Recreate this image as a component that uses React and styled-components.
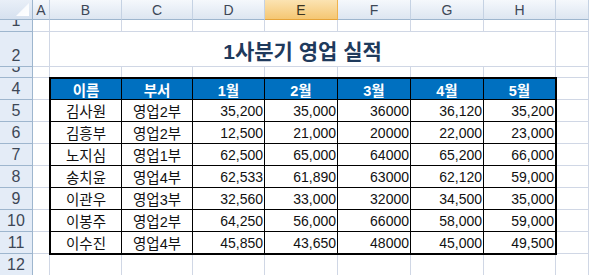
import React from 'react';
import styled, { createGlobalStyle } from 'styled-components';

const GlobalStyle = createGlobalStyle`
  html, body {
    margin: 0;
    padding: 0;
    background: #fff;
  }
  body {
    font-family: "Liberation Sans", "Noto Sans CJK KR", sans-serif;
    overflow: hidden;
  }
`;

const Sheet = styled.div`
  display: grid;
  grid-template-columns: 33px 17px 72px 71px 72px 73px 73px 73px 72px 1fr;
  grid-template-rows: 20px 12px 35px 11px repeat(9, 22px);
  width: 100vw;
  height: 100vh;
  overflow: hidden;
`;

const Corner = styled.div`
  position: relative;
  background: linear-gradient(#e9eff8, #d6e1ef);
  border-right: 1px solid #9eb6ce;
  border-bottom: 1px solid #9eb6ce;
  box-sizing: border-box;

  &::after {
    content: '';
    position: absolute;
    right: 3px;
    bottom: 3px;
    width: 13px;
    height: 13px;
    background: linear-gradient(135deg, #f4f7fc, #ffffff);
    clip-path: polygon(100% 0, 100% 100%, 0 100%);
  }
`;

const ColHead = styled.div`
  display: flex;
  align-items: center;
  justify-content: center;
  box-sizing: border-box;
  font-size: 14px;
  color: ${p => (p.$active ? '#3b3422' : '#3d4756')};
  background: ${p =>
    p.$active
      ? 'linear-gradient(#fbe3b2, #f5c773)'
      : 'linear-gradient(#f5f8fc, #dde6f1)'};
  border-right: 1px solid ${p => (p.$active ? '#f0b34d' : '#c5d2e3')};
  border-bottom: 1px solid ${p => (p.$active ? '#e6a43a' : '#9eb6ce')};
`;

const RowHead = styled.div`
  display: flex;
  align-items: flex-end;
  justify-content: center;
  overflow: hidden;
  box-sizing: border-box;
  font-size: 16px;
  line-height: 20px;
  color: #3d4756;
  background: #e4ecf7;
  border-right: 1px solid #9eb6ce;
  border-bottom: 1px solid #9eb6ce;
`;

const Cell = styled.div`
  box-sizing: border-box;
  border-right: 1px solid #d0d7e5;
  border-bottom: 1px solid #d0d7e5;
`;

const Title = styled.div`
  grid-column: span 7;
  display: flex;
  align-items: center;
  justify-content: center;
  box-sizing: border-box;
  border-right: 1px solid #d0d7e5;
  border-bottom: 1px solid #d0d7e5;
  font-size: 21px;
  font-weight: 700;
  color: #1f3a5c;
  padding-top: 1px;
`;

const Table = styled.div`
  grid-column: 3 / 10;
  grid-row: 5 / 13;
  margin: -1px;
  display: grid;
  grid-template-columns: 70px 70px 71px 72px 72px 72px 71px;
  grid-template-rows: 20px repeat(7, 21px);
  gap: 1px;
  background: #000;
  border: 2px solid #000;
  position: relative;
  z-index: 1;
`;

const HeadCell = styled.div`
  display: flex;
  align-items: center;
  justify-content: center;
  background: #0070c0;
  color: #fff;
  font-weight: 700;
  font-size: 14.5px;
`;

const DataCell = styled.div`
  display: flex;
  align-items: center;
  justify-content: ${p => (p.$num ? 'flex-end' : 'center')};
  padding-right: ${p => (p.$num ? '1px' : '0')};
  background: #fff;
  color: #111;
  font-size: ${p => (p.$num ? '14px' : '14.5px')};
`;

const cols = ['A', 'B', 'C', 'D', 'E', 'F', 'G', 'H', ''];
const heads = ['이름', '부서', '1월', '2월', '3월', '4월', '5월'];
const rows = [
  ['김사원', '영업2부', '35,200', '35,000', '36000', '36,120', '35,200'],
  ['김흥부', '영업2부', '12,500', '21,000', '20000', '22,000', '23,000'],
  ['노지심', '영업1부', '62,500', '65,000', '64000', '65,200', '66,000'],
  ['송치윤', '영업4부', '62,533', '61,890', '63000', '62,120', '59,000'],
  ['이관우', '영업3부', '32,560', '33,000', '32000', '34,500', '35,000'],
  ['이봉주', '영업2부', '64,250', '56,000', '66000', '58,000', '59,000'],
  ['이수진', '영업4부', '45,850', '43,650', '48000', '45,000', '49,500'],
];

const BlankRow = ({ n }) => (
  <>
    <RowHead>{n}</RowHead>
    {cols.map((c, i) => (
      <Cell key={i} />
    ))}
  </>
);

export default function App() {
  return (
    <>
      <GlobalStyle />
      <Sheet>
        <Corner />
        {cols.map((c, i) => (
          <ColHead key={i} $active={c === 'E'}>
            {c}
          </ColHead>
        ))}

        <BlankRow n={1} />

        <RowHead>2</RowHead>
        <Cell />
        <Title>1사분기 영업 실적</Title>
        <Cell />

        <BlankRow n={3} />

        <Table>
          {heads.map(h => (
            <HeadCell key={h}>{h}</HeadCell>
          ))}
          {rows.map(r =>
            r.map((v, i) => (
              <DataCell key={r[0] + i} $num={i > 1}>
                {v}
              </DataCell>
            ))
          )}
        </Table>

        {[4, 5, 6, 7, 8, 9, 10, 11].map(n => (
          <React.Fragment key={n}>
            <RowHead>{n}</RowHead>
            <Cell />
            <Cell />
          </React.Fragment>
        ))}

        <BlankRow n={12} />
      </Sheet>
    </>
  );
}
